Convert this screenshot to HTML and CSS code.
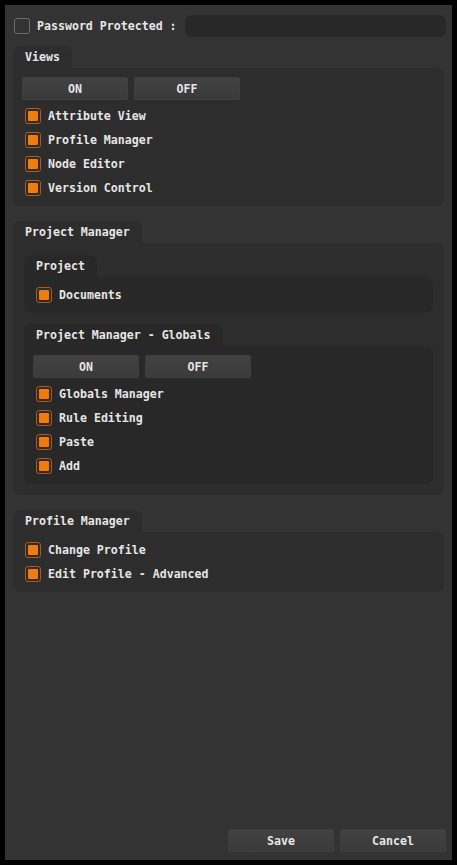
FILE: index.html
```html
<!DOCTYPE html>
<html>
<head>
<meta charset="utf-8">
<link rel="stylesheet" href="styles.css">
</head>
<body>
<div class="panel">
  <div class="pw-row">
    <span class="cb"></span>
    <span class="pw-label">Password Protected :</span>
    <span class="pw-field"></span>
  </div>

  <div class="group top">
    <div class="tab">Views</div>
    <div class="box">
      <div class="btns"><button class="btn">ON</button><button class="btn">OFF</button></div>
      <div class="row"><span class="cb on"></span>Attribute View</div>
      <div class="row"><span class="cb on"></span>Profile Manager</div>
      <div class="row"><span class="cb on"></span>Node Editor</div>
      <div class="row"><span class="cb on"></span>Version Control</div>
    </div>
  </div>

  <div class="group top">
    <div class="tab">Project Manager</div>
    <div class="box outer">
      <div class="group inner">
        <div class="tab">Project</div>
        <div class="box">
          <div class="row"><span class="cb on"></span>Documents</div>
        </div>
      </div>
      <div class="group inner">
        <div class="tab">Project Manager - Globals</div>
        <div class="box">
          <div class="btns"><button class="btn">ON</button><button class="btn">OFF</button></div>
          <div class="row"><span class="cb on"></span>Globals Manager</div>
          <div class="row"><span class="cb on"></span>Rule Editing</div>
          <div class="row"><span class="cb on"></span>Paste</div>
          <div class="row"><span class="cb on"></span>Add</div>
        </div>
      </div>
    </div>
  </div>

  <div class="group top">
    <div class="tab">Profile Manager</div>
    <div class="box">
      <div class="row"><span class="cb on"></span>Change Profile</div>
      <div class="row"><span class="cb on"></span>Edit Profile - Advanced</div>
    </div>
  </div>

  <div class="spacer"></div>

  <div class="footer">
    <button class="btn">Save</button><button class="btn">Cancel</button>
  </div>
</div>
</body>
</html>
```

FILE: styles.css
```css
* { box-sizing: border-box; }
html, body { margin: 0; padding: 0; background: #000; }
body {
  width: 457px;
  height: 865px;
  padding: 5px;
  font-family: "DejaVu Sans Mono", "Liberation Mono", monospace;
  font-weight: bold;
  font-size: 11.6px;
  color: #e6e6e6;
}
.panel {
  width: 447px;
  height: 855px;
  background: #333333;
  display: flex;
  flex-direction: column;
  padding: 10px 6px 8px 8px;
}
.pw-row {
  display: flex;
  align-items: center;
  height: 22px;
  margin-left: 1px;
}
.pw-label { margin-left: 7px; }
.pw-field {
  flex: 1;
  height: 22px;
  margin-left: 8px;
  background: #282828;
  border-radius: 7px;
}
.cb {
  width: 16px;
  height: 16px;
  flex: none;
  border: 1px solid #6c6c6c;
  border-radius: 3px;
  position: relative;
}
.cb.on {
  border: 1.5px solid #b4590f;
  background: #2c2c2c;
}
.cb.on::after {
  content: "";
  position: absolute;
  left: 2px; top: 2px; right: 2px; bottom: 2px;
  background: #f07c0c;
  border-radius: 1px;
}
.group { display: flex; flex-direction: column; align-items: flex-start; }
.group.top { margin-top: 9px; margin-right: 2px; }
.group.top + .group.top { margin-top: 15px; }
.tab {
  height: 22px;
  line-height: 22px;
  padding: 0 12px;
  background: #2d2d2d;
  border-radius: 7px 7px 0 0;
}
.box {
  align-self: stretch;
  background: #2d2d2d;
  border-radius: 0 7px 7px 7px;
  padding: 6px 9px 6px 9px;
}
.box.outer { padding: 12px 11px 11px 11px; }
.group.inner .tab, .group.inner .box { background: #282828; }
.group.inner + .group.inner { margin-top: 11px; }
.btns {
  display: flex;
  gap: 6px;
  margin-top: 3px;
  margin-bottom: 4px;
}
.btn {
  width: 106px;
  height: 23px;
  padding: 0;
  font: inherit;
  color: #e6e6e6;
  background: linear-gradient(#424242, #3a3a3a);
  border: 1px solid #3f3f3f;
  border-radius: 2px;
}
.row {
  display: flex;
  align-items: center;
  height: 24px;
  padding-left: 3px;
}
.row .cb { margin-right: 7px; }
.spacer { flex: 1; }
.footer {
  display: flex;
  justify-content: flex-end;
  gap: 6px;
}
```
